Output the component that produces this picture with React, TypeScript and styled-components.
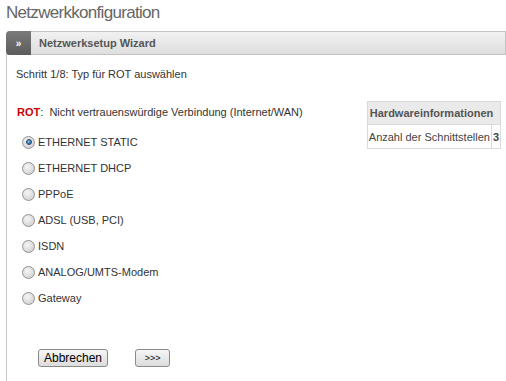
import React from 'react';
import styled, { createGlobalStyle } from 'styled-components';

const GlobalStyle = createGlobalStyle`
  html, body {
    margin: 0;
    padding: 0;
    background: #fff;
  }
  body {
    font-family: 'Liberation Sans', Arial, sans-serif;
    color: #333;
  }
`;

const Page = styled.div`
  width: 506px;
  height: 381px;
  overflow: hidden;
  padding: 3px 0 0 6px;
  box-sizing: border-box;
`;

const Title = styled.h1`
  margin: 0;
  height: 28px;
  font-size: 17px;
  font-weight: normal;
  color: #666;
  letter-spacing: -0.7px;
`;

const Panel = styled.div`
  display: flex;
  flex-direction: column;
`;

const PanelHeader = styled.div`
  display: flex;
  align-items: stretch;
  height: 22px;
  border: 1px solid #c4c4c4;
  border-left: none;
  border-radius: 4px 0 0 0;
  background: linear-gradient(#f1f1f1, #dedede);
`;

const HeaderTab = styled.div`
  width: 25px;
  display: flex;
  align-items: center;
  justify-content: center;
  margin: -1px 0;
  border-radius: 4px 0 0 4px;
  background: linear-gradient(#7a7a7a, #5c5c5c);
  color: #fff;
  font-size: 10px;
  font-weight: bold;
`;

const HeaderTitle = styled.div`
  display: flex;
  align-items: center;
  padding-left: 8px;
  font-size: 11px;
  font-weight: bold;
  color: #555;
`;

const PanelBody = styled.div`
  border-left: 1px solid #c8c8c8;
  height: 330px;
  padding: 13px 0 0 9px;
  font-size: 11px;
  color: #333;
`;

const StepText = styled.div`
  height: 25px;
`;

const Columns = styled.div`
  display: flex;
  justify-content: space-between;
  padding-right: 5px;
  margin-top: 13px;
`;

const LeftColumn = styled.div`
  display: flex;
  flex-direction: column;
`;

const Interface = styled.div`
  height: 29px;
  padding-left: 1px;
`;

const Red = styled.span`
  color: #c00;
  font-weight: bold;
`;

const RadioList = styled.div`
  display: flex;
  flex-direction: column;
  gap: 12px;
  padding-left: 6px;
`;

const RadioRow = styled.label`
  display: flex;
  align-items: center;
  gap: 3px;
  height: 14px;
`;

const Radio = styled.span<{ $checked?: boolean }>`
  width: 11px;
  height: 11px;
  border-radius: 50%;
  border: 1px solid #929292;
  background: radial-gradient(circle at 40% 35%, #f6f6f6, #c9c9c9);
  display: flex;
  align-items: center;
  justify-content: center;

  &::after {
    content: '';
    display: ${(p) => (p.$checked ? 'block' : 'none')};
    width: 6px;
    height: 6px;
    border-radius: 50%;
    background: radial-gradient(circle at 40% 35%, #7cc0f4, #174f8a);
    border: 1px solid #25466b;
    box-sizing: border-box;
  }
`;

const Buttons = styled.div`
  display: flex;
  gap: 27px;
  padding-left: 22px;
  margin-top: 44px;
`;

const Button = styled.button`
  height: 18px;
  padding: 0 5px;
  border: 1px solid #8a8a8a;
  border-radius: 3px;
  background: linear-gradient(#f6f6f6, #dcdcdc);
  font-family: 'Liberation Sans', Arial, sans-serif;
  font-size: 12px;
  color: #000;
  line-height: 14px;
`;

const SmallButton = styled(Button)`
  font-size: 9px;
  width: 35px;
`;

const InfoTable = styled.table`
  border-collapse: collapse;
  align-self: flex-start;
  font-size: 11px;
  margin-top: -5px;
`;

const Th = styled.th`
  background: #eaeaea;
  border: 1px solid #dadada;
  height: 22px;
  padding: 0 2px;
  text-align: left;
  font-weight: bold;
  color: #555;
`;

const Td = styled.td<{ $bold?: boolean }>`
  border: 1px solid #dadada;
  height: 23px;
  padding: 0 1px;
  font-weight: ${(p) => (p.$bold ? 'bold' : 'normal')};
  color: #444;
`;

const options = [
  'ETHERNET STATIC',
  'ETHERNET DHCP',
  'PPPoE',
  'ADSL (USB, PCI)',
  'ISDN',
  'ANALOG/UMTS-Modem',
  'Gateway',
];

export default function App() {
  return (
    <>
      <GlobalStyle />
      <Page>
        <Title>Netzwerkkonfiguration</Title>
        <Panel>
          <PanelHeader>
            <HeaderTab>&raquo;</HeaderTab>
            <HeaderTitle>Netzwerksetup Wizard</HeaderTitle>
          </PanelHeader>
          <PanelBody>
            <StepText>Schritt 1/8: Typ für ROT auswählen</StepText>
            <Columns>
              <LeftColumn>
                <Interface>
                  <Red>ROT</Red>:&nbsp; Nicht vertrauenswürdige Verbindung (Internet/WAN)
                </Interface>
                <RadioList>
                  {options.map((o, i) => (
                    <RadioRow key={o}>
                      <Radio $checked={i === 0} />
                      {o}
                    </RadioRow>
                  ))}
                </RadioList>
                <Buttons>
                  <Button>Abbrechen</Button>
                  <SmallButton>&gt;&gt;&gt;</SmallButton>
                </Buttons>
              </LeftColumn>
              <InfoTable>
                <thead>
                  <tr>
                    <Th colSpan={2}>Hardwareinformationen</Th>
                  </tr>
                </thead>
                <tbody>
                  <tr>
                    <Td>Anzahl der Schnittstellen</Td>
                    <Td $bold>3</Td>
                  </tr>
                </tbody>
              </InfoTable>
            </Columns>
          </PanelBody>
        </Panel>
      </Page>
    </>
  );
}
